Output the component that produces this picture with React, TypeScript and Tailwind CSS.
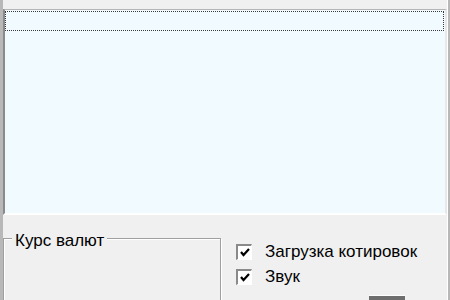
import React from "react";

type CheckRowProps = {
  label: string;
  checked?: boolean;
};

function CheckRow({ label, checked = true }: CheckRowProps) {
  return (
    <div className="flex h-[25px] items-center">
      <div className="flex h-[16px] w-[16px] shrink-0 items-center justify-center border-l-2 border-t-2 border-r border-b border-l-[#8a8a8a] border-t-[#8a8a8a] border-r-[#ffffff] border-b-[#ffffff] bg-white">
        {checked && (
          <svg width="10" height="9" viewBox="0 0 10 9" className="mt-[1px]">
            <polyline points="1,4 3.5,7 9,1" fill="none" stroke="#000" strokeWidth="2.2" />
          </svg>
        )}
      </div>
      <span className="ml-[13px] whitespace-nowrap text-[17px] leading-[19px] text-black">{label}</span>
    </div>
  );
}

export default function App() {
  return (
    <div
      className="flex h-[300px] w-[450px] overflow-hidden bg-[#f0f0f0]"
      style={{ fontFamily: '"Liberation Sans", Arial, sans-serif' }}
    >
      <div className="w-[3px] shrink-0 bg-[#b8b8b8]" />

      <div className="flex min-w-0 flex-1 flex-col pt-[9px]">
        {/* list box */}
        <div className="h-[206px] shrink-0 border-l-2 border-t border-r-2 border-b-2 border-l-[#8a8a8a] border-t-[#b4b4b4] border-r-[#e8e8e8] border-b-[#ffffff] bg-[#f0faff] pt-[1px]">
          <div className="mr-[1px] h-[20px] border border-dotted border-[#3a3a3a]" />
        </div>

        {/* bottom panel */}
        <div className="mt-[23px] flex shrink-0 items-start">
          <div className="relative h-[80px] w-[218px] shrink-0 border border-[#a0a0a0] shadow-[inset_1px_1px_0_#ffffff,1px_1px_0_#ffffff]">
            <span className="absolute left-[8px] top-[-8px] whitespace-nowrap bg-[#f0f0f0] px-[3px] text-[17px] leading-[19px] text-black">
              Курс валют
            </span>
          </div>

          <div className="ml-[15px] flex flex-col pt-[1px]">
            <CheckRow label="Загрузка котировок" />
            <CheckRow label="Звук" />
            <div className="ml-[133px] mt-[6px] h-[20px] w-[36px] shrink-0 border-t border-t-[#ffffff] bg-[#6e6e6e]" />
          </div>
        </div>
      </div>

      <div className="w-[3px] shrink-0 border-l border-l-[#ffffff] bg-[#b8b8b8]" />
    </div>
  );
}
